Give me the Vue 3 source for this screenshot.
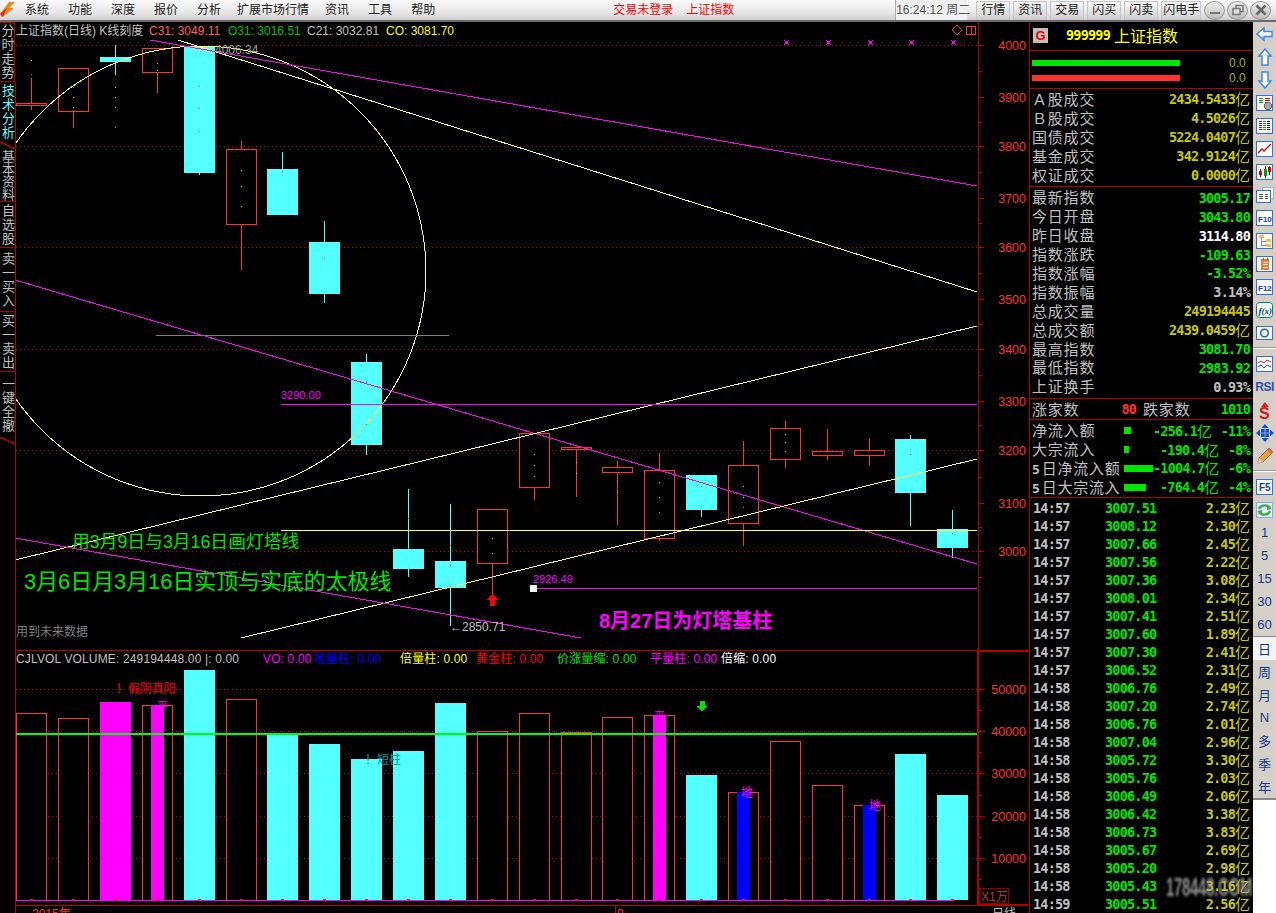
<script setup>
const menus = ['系统', '功能', '深度', '报价', '分析', '扩展市场行情', '资讯', '工具', '帮助']
const quickBtns = ['行情', '资讯', '交易', '闪买', '闪卖', '闪电手']
const tabs = [
  { name: '分时走势', h: 60, cls: 'boxed' },
  { name: '技术分析', h: 67, cls: 'active' },
  { name: '基本资料', h: 53, cls: 'tight' },
  { name: '自选股', h: 46 },
  { name: '卖一买入', h: 64 },
  { name: '买一卖出', h: 60 },
  { name: '一键全撤', h: 72, cls: 'lastTab' }
]

const RED = '#ff3232'
const CYAN = '#54ffff'
const MAG = '#ff00ff'
const GRN = '#00e600'
const GRY = '#c0c0c0'

// hollow = 收阳，实心 = 收阴
const candles = [
  { x: 31, t: 103, b: 105, wt: 78, wb: 110, up: 1, dots: [[60, '#ffff54'], [74, RED]] },
  { x: 73, t: 68, b: 111, wt: 68, wb: 128, up: 1, dots: [[87, '#ff8080'], [97, GRY], [107, GRY]] },
  { x: 115, t: 57, b: 62, wt: 45, wb: 75, up: 0, dots: [[87, GRY], [97, GRY], [107, GRY], [127, GRN]] },
  { x: 157, t: 48, b: 72, wt: 48, wb: 93, up: 1, dots: [[63, '#ff8080'], [70, GRY]] },
  { x: 199, t: 46, b: 173, wt: 46, wb: 175, up: 0, dots: [[86, RED], [108, RED], [131, GRN]] },
  { x: 241, t: 149, b: 224, wt: 141, wb: 270, up: 1, dots: [[170, '#ff8080'], [186, GRY], [206, GRN]] },
  { x: 282, t: 169, b: 215, wt: 152, wb: 215, up: 0, dots: [[171, RED], [190, GRY]] },
  { x: 324, t: 242, b: 294, wt: 221, wb: 303, up: 0, dots: [[258, RED], [275, GRY]] },
  { x: 366, t: 362, b: 445, wt: 354, wb: 455, up: 0, dots: [[382, RED], [402, GRY], [424, GRN]] },
  { x: 408, t: 549, b: 569, wt: 489, wb: 577, up: 0, dots: [[518, RED], [548, GRN]] },
  { x: 450, t: 561, b: 588, wt: 504, wb: 626, up: 0, dots: [[545, RED], [565, RED], [586, GRN]] },
  { x: 492, t: 509, b: 563, wt: 509, wb: 605, up: 1, dots: [[538, '#ff8080'], [553, GRY], [568, GRN]] },
  { x: 534, t: 433, b: 487, wt: 433, wb: 500, up: 1, dots: [[454, '#ff8080'], [465, GRY], [476, GRN]] },
  { x: 576, t: 447, b: 449, wt: 447, wb: 497, up: 1, dots: [[462, '#ff8080'], [473, GRY], [479, GRN]] },
  { x: 617, t: 467, b: 472, wt: 461, wb: 525, up: 1, dots: [[481, '#ff8080'], [492, GRY], [502, GRN]] },
  { x: 659, t: 470, b: 538, wt: 453, wb: 541, up: 1, dots: [[482, '#ff8080'], [497, GRY], [512, GRN]] },
  { x: 701, t: 475, b: 510, wt: 475, wb: 517, up: 0, dots: [[486, RED], [497, GRY]] },
  { x: 743, t: 465, b: 523, wt: 441, wb: 546, up: 1, dots: [[486, '#ff8080'], [497, GRY], [507, GRN]] },
  { x: 785, t: 428, b: 459, wt: 421, wb: 468, up: 1, dots: [[434, '#ff8080'], [442, GRY], [451, GRN]] },
  { x: 827, t: 451, b: 455, wt: 429, wb: 460, up: 1, dots: [] },
  { x: 869, t: 450, b: 455, wt: 438, wb: 466, up: 1, dots: [] },
  { x: 910, t: 439, b: 493, wt: 435, wb: 526, up: 0, dots: [[454, RED], [470, GRY]] },
  { x: 952, t: 529, b: 548, wt: 510, wb: 558, up: 0, dots: [[533, RED]] }
]

// 成交量柱：顶部 y，kind: r 空心红, c 青, m 品红, rm 空心+品红芯, rb 空心+蓝芯
const vols = [
  [713, 'r'], [718, 'r'], [702, 'm'], [705, 'rm'], [670, 'c'], [699, 'r'], [735, 'c'], [744, 'c'],
  [759, 'c'], [751, 'c'], [703, 'c'], [731, 'r'], [713, 'r'], [732, 'r'], [717, 'r'], [715, 'rm'],
  [775, 'c'], [792, 'rb'], [741, 'r'], [785, 'r'], [805, 'rb'], [754, 'c'], [795, 'c']
]
const volBars = vols.map((v, i) => ({ x: candles[i].x, top: v[0], kind: v[1] }))

const gridY = [45, 146, 247, 349, 450, 551]
const axisMain = [
  ['4000', 45], ['3900', 97], ['3800', 146], ['3700', 198], ['3600', 247], ['3500', 299],
  ['3400', 349], ['3300', 401], ['3200', 450], ['3100', 503], ['3000', 551]
]
const minorMain = [71, 122, 172, 223, 273, 324, 375, 425, 477, 527, 577]
const volGrid = [
  ['50000', 689], ['40000', 731], ['30000', 773], ['20000', 816], ['10000', 858]
]
const minorVol = [710, 752, 795, 837, 879]
const markers = [786, 828, 870, 911, 953]

const volLabels = [
  { x: 16, c: GRY, t: 'CJLVOL VOLUME: 249194448.00 |: 0.00' },
  { x: 263, c: MAG, t: 'VO: 0.00' },
  { x: 314, c: '#0000ff', t: '地量柱: 0.00' },
  { x: 400, c: '#ffff00', t: '倍量柱: 0.00' },
  { x: 476, c: '#ff0000', t: '黄金柱: 0.00' },
  { x: 557, c: '#00e600', t: '价涨量缩: 0.00' },
  { x: 650, c: MAG, t: '平量柱: 0.00' },
  { x: 721, c: '#ffffff', t: '倍缩: 0.00' }
]

const turnover = [
  { k: 'Ａ股成交', v: '2434.5433', u: '亿' },
  { k: 'Ｂ股成交', v: '4.5026', u: '亿' },
  { k: '国债成交', v: '5224.0407', u: '亿' },
  { k: '基金成交', v: '342.9124', u: '亿' },
  { k: '权证成交', v: '0.0000', u: '亿' }
]
const stats = [
  { k: '最新指数', v: '3005.17', c: 'green' },
  { k: '今日开盘', v: '3043.80', c: 'green' },
  { k: '昨日收盘', v: '3114.80', c: 'white' },
  { k: '指数涨跌', v: '-109.63', c: 'green' },
  { k: '指数涨幅', v: '-3.52%', c: 'green' },
  { k: '指数振幅', v: '3.14%', c: 'gray' },
  { k: '总成交量', v: '249194445', c: 'olive' },
  { k: '总成交额', v: '2439.0459', u: '亿', c: 'olive' },
  { k: '最高指数', v: '3081.70', c: 'green' },
  { k: '最低指数', v: '2983.92', c: 'green' },
  { k: '上证换手', v: '0.93%', c: 'gray' }
]
const flows = [
  { n: '', k: '净流入额', w: 7, v: '-256.1', p: '-11%', cls: 'shift' },
  { n: '', k: '大宗流入', w: 5, v: '-190.4', p: '-8%' },
  { n: '5', k: '日净流入额', w: 29, v: '-1004.7', p: '-6%' },
  { n: '5', k: '日大宗流入', w: 22, v: '-764.4', p: '-4%' }
]
const ticks = [
  ['14:57', '3007.51', '2.23'], ['14:57', '3008.12', '2.30'], ['14:57', '3007.66', '2.45'],
  ['14:57', '3007.56', '2.22'], ['14:57', '3007.36', '3.08'], ['14:57', '3008.01', '2.34'],
  ['14:57', '3007.41', '2.51'], ['14:57', '3007.60', '1.89'], ['14:57', '3007.30', '2.41'],
  ['14:57', '3006.52', '2.31'], ['14:58', '3006.76', '2.49'], ['14:58', '3007.20', '2.74'],
  ['14:58', '3006.76', '2.01'], ['14:58', '3007.04', '2.96'], ['14:58', '3005.72', '3.30'],
  ['14:58', '3005.76', '2.03'], ['14:58', '3006.49', '2.06'], ['14:58', '3006.42', '3.38'],
  ['14:58', '3006.73', '3.83'], ['14:58', '3005.67', '2.69'], ['14:58', '3005.20', '2.98'],
  ['14:58', '3005.43', '3.16'], ['14:59', '3005.51', '2.56']
]
const periodsTop = ['1', '5', '15', '30', '60']
const periodsBottom = ['周', '月', 'N', '多', '季', '年']
</script>

<template>
  <div class="app">
    <!-- 顶部菜单 -->
    <header class="topbar">
      <svg class="logo" width="15" height="18" viewBox="0 0 15 18">
        <polygon points="0,14 9,2 15,2 9,8 14,8 2,17" fill="#f08018" />
        <polygon points="0,14 7,8 3,17" fill="#d83010" />
      </svg>
      <nav class="menu">
        <span v-for="m in menus" :key="m" :class="{ ext: m.length > 2 }">{{ m }}</span>
      </nav>
      <div class="status">
        <span>交易未登录</span>
        <span>上证指数</span>
      </div>
      <div class="clock">16:24:12 周二</div>
      <div class="quick">
        <span v-for="b in quickBtns" :key="b" class="qbtn">{{ b }}</span>
      </div>
      <div class="winbtns">
        <span class="wbtn"><svg width="14" height="14" viewBox="0 0 14 14"><rect x="2" y="9" width="10" height="2" fill="#777" /></svg></span>
        <span class="wbtn"><svg width="14" height="14" viewBox="0 0 14 14"><rect x="5" y="2.5" width="7" height="6" fill="none" stroke="#777" stroke-width="1.5" /><rect x="2" y="5.5" width="7" height="6" fill="#ddd" stroke="#777" stroke-width="1.5" /></svg></span>
        <span class="wbtn"><svg width="14" height="14" viewBox="0 0 14 14"><path d="M2.5 2.5 L11.5 11.5 M11.5 2.5 L2.5 11.5" stroke="#666" stroke-width="2.6" /></svg></span>
      </div>
    </header>

    <div class="body">
      <!-- 左侧页签 -->
      <aside class="tabs">
        <div v-for="t in tabs" :key="t.name" class="tab" :class="t.cls" :style="{ height: t.h + 'px' }">{{ t.name }}</div>
      </aside>

      <!-- K线 + 成交量，坐标直接用整页像素 -->
      <svg class="chart" width="1014" height="891" viewBox="15 22 1014 891" shape-rendering="crispEdges">
        <defs>
          <clipPath id="plot"><rect x="15" y="22" width="963" height="628" /></clipPath>
        </defs>

        <!-- 网格 -->
        <line v-for="y in gridY" :key="'g' + y" x1="16" x2="977" :y1="y + 0.5" :y2="y + 0.5" class="dots" />
        <line v-for="g in volGrid" :key="'v' + g[1]" x1="16" x2="977" :y1="g[1] + 0.5" :y2="g[1] + 0.5" class="dots" />

        <!-- 蜡烛 -->
        <g v-for="c in candles" :key="c.x">
          <line :x1="c.x + 0.5" :x2="c.x + 0.5" :y1="c.wt" :y2="c.wb" :stroke="c.up ? RED : CYAN" />
          <rect v-if="c.up" :x="c.x - 14.5" :y="c.t + 0.5" width="30" :height="c.b - c.t" fill="#000" :stroke="RED" stroke-width="1" />
          <rect v-else :x="c.x - 15" :y="c.t" width="31" :height="c.b - c.t" :fill="CYAN" />
          <rect v-for="(d, i) in c.dots" :key="i" :x="c.x" :y="d[0]" width="1" height="1" :fill="d[1]" />
        </g>

        <!-- 画线 -->
        <g clip-path="url(#plot)">
          <circle cx="201" cy="271" r="225" fill="none" stroke="#ffff66" />
          <line x1="178" y1="40" x2="977" y2="292" stroke="#ffff66" />
          <line x1="150" y1="40" x2="977" y2="186" :stroke="MAG" />
          <line x1="15" y1="280" x2="977" y2="564" :stroke="MAG" />
          <line x1="15" y1="560" x2="977" y2="326" stroke="#ffff66" />
          <line x1="241" y1="638" x2="977" y2="459" stroke="#ffff66" />
          <line x1="15" y1="538" x2="581" y2="638" :stroke="MAG" />
          <line x1="281" y1="404.5" x2="977" y2="404.5" :stroke="MAG" />
          <line x1="281" y1="530.5" x2="977" y2="530.5" stroke="#ffff66" />
          <line x1="533" y1="588.5" x2="977" y2="588.5" :stroke="MAG" />
          <line x1="156" y1="335.5" x2="449" y2="335.5" stroke="#808080" />
          <rect x="530" y="585" width="7" height="7" fill="#fff" />
          <g v-for="m in markers" :key="m">
            <rect :x="m - 1" y="41" width="3" height="3" :fill="MAG" />
            <path :d="`M${m - 2} 40h1v1h-1z M${m + 2} 40h1v1h-1z M${m - 2} 44h1v1h-1z M${m + 2} 44h1v1h-1z`" :fill="MAG" />
          </g>
        </g>

        <polygon points="492.5,594 498,600 495,600 495,606 490,606 490,600 487,600" fill="#ff0000" />
        <polygon points="957,25 962,30 957,35 952,30" fill="none" :stroke="RED" />
        <rect x="966.5" y="26.5" width="9" height="8" fill="none" :stroke="RED" />
        <line x1="971.5" y1="26" x2="971.5" y2="35" :stroke="RED" />

        <!-- 主图文字 -->
        <g class="t" shape-rendering="auto">
          <text x="16" y="35" fill="#c0c0c0">上证指数(日线) K线刻度</text>
          <text x="149" y="35" fill="#ff6060">C31: 3049.11</text>
          <text x="228" y="35" fill="#00c000">O31: 3016.51</text>
          <text x="307" y="35" fill="#c0c0c0">C21: 3032.81</text>
          <text x="386" y="35" fill="#ffff00">CO: 3081.70</text>
          <text x="215" y="54" fill="#a0a0a0">4006.34</text>
          <text x="281" y="399" :fill="MAG" class="small">3290.00</text>
          <text x="533" y="583" :fill="MAG" class="small">2926.49</text>
          <text x="450" y="631" fill="#c0c0c0">←2850.71</text>
          <text x="72" y="548" fill="#00e600" class="note1">用3月9日与3月16日画灯塔线</text>
          <text x="24" y="589" fill="#00e600" class="note2">3月6日月3月16日实顶与实底的太极线</text>
          <text x="599" y="628" :fill="MAG" class="note3">8月27日为灯塔基柱</text>
          <text x="16" y="636" fill="#808080">用到未来数据</text>
          <text v-for="a in axisMain" :key="a[0]" x="1026" :y="a[1] + 5" :fill="RED" class="ax">{{ a[0] }}</text>
        </g>

        <!-- 分隔线 -->
        <line x1="978.5" x2="978.5" y1="22" y2="650" stroke="#b00000" />
        <line v-for="a in axisMain" :key="'t' + a[0]" x1="979" x2="984" :y1="a[1] + 0.5" :y2="a[1] + 0.5" stroke="#b00000" />
        <line v-for="y in minorMain" :key="'m' + y" x1="979" x2="982" :y1="y + 0.5" :y2="y + 0.5" stroke="#b00000" />
        <rect x="15" y="650" width="1014" height="1" fill="#c00000" />
        <rect x="14.5" y="82" width="1" height="831" fill="#c00000" />

        <!-- 成交量 -->
        <g v-for="v in volBars" :key="'b' + v.x">
          <rect v-if="v.kind === 'c' || v.kind === 'm'" :x="v.x - 15" :y="v.top" width="31" :height="900 - v.top" :fill="v.kind === 'c' ? CYAN : MAG" />
          <rect v-else :x="v.x - 14.5" :y="v.top + 0.5" width="30" :height="900 - v.top" fill="#000" :stroke="RED" />
          <rect v-if="v.kind === 'rm'" :x="v.x - 6" :y="v.top" width="13" :height="900 - v.top" :fill="MAG" />
          <rect v-if="v.kind === 'rb'" :x="v.x - 6" :y="v.top" width="13" :height="900 - v.top" fill="#0000ff" />
        </g>
        <rect x="16" y="733" width="961" height="2" fill="#00ff00" />
        <rect x="16" y="900" width="937" height="1" :fill="MAG" />
        <rect v-for="c in candles" :key="'k' + c.x" :x="c.x - 1" y="899" width="3" height="2" fill="#ff1040" />
        <polygon points="702,712 707,706 704.5,706 704.5,701 699.5,701 699.5,706 697,706" fill="#00e600" />

        <g class="t" shape-rendering="auto">
          <text v-for="l in volLabels" :key="l.x" :x="l.x" y="663" :fill="l.c" class="vl">{{ l.t }}</text>
          <text x="116" y="693" fill="#ff0000">！假阴真阳</text>
          <text x="365" y="764" fill="#009a9a">！短柱</text>
          <text x="157" y="710" :fill="MAG" class="tiny">平</text>
          <text x="654" y="720" :fill="MAG" class="tiny">平</text>
          <text x="741" y="797" :fill="MAG">地</text>
          <text x="869" y="810" :fill="MAG">地</text>
          <text v-for="g in volGrid" :key="g[0]" x="1026" :y="g[1] + 5" :fill="RED" class="ax">{{ g[0] }}</text>
          <text x="981" y="901" fill="#c03030">X1万</text>
          <text x="32" y="918" fill="#ff3232">2015年</text>
          <text x="617" y="918" fill="#ff3232">9</text>
          <text x="992" y="918" fill="#c0c0c0">日线</text>
        </g>

        <rect x="977" y="650" width="2" height="256" fill="#b00000" />
        <rect x="977" y="650" width="52" height="2" fill="#b00000" />
        <rect x="15" y="905" width="1014" height="1" fill="#c00000" />
        <rect x="977" y="904" width="52" height="2" fill="#b00000" />
        <rect x="979.5" y="888.5" width="29" height="15" fill="none" stroke="#900000" />
        <line x1="615.5" x2="615.5" y1="906" y2="913" stroke="#c00000" />
        <line v-for="g in volGrid" :key="'vt' + g[0]" x1="979" x2="985" :y1="g[1] + 0.5" :y2="g[1] + 0.5" stroke="#b00000" />
        <line v-for="y in minorVol" :key="'vm' + y" x1="979" x2="982" :y1="y + 0.5" :y2="y + 0.5" stroke="#b00000" />
      </svg>

      <!-- 右侧报价 -->
      <section class="panel">
        <div class="title">
          <span class="g">G</span>
          <span class="code">999999</span>
          <span class="name">上证指数</span>
        </div>
        <div class="bars">
          <div class="barrow"><i class="bar bg" /><span>0.0</span></div>
          <div class="barrow"><i class="bar br" /><span>0.0</span></div>
        </div>
        <div class="block">
          <div v-for="r in turnover" :key="r.k" class="row">
            <span class="k">{{ r.k }}</span>
            <span class="v olive">{{ r.v }}<em>{{ r.u }}</em></span>
          </div>
        </div>
        <div class="block">
          <div v-for="r in stats" :key="r.k" class="row">
            <span class="k">{{ r.k }}</span>
            <span class="v" :class="r.c">{{ r.v }}<em v-if="r.u">{{ r.u }}</em></span>
          </div>
        </div>
        <div class="block updown">
          <span class="k">涨家数</span>
          <span class="v red n80">80</span>
          <span class="k k2">跌家数</span>
          <span class="v green last">1010</span>
        </div>
        <div class="block flows">
          <div v-for="f in flows" :key="f.k" class="row flow" :class="f.cls">
            <span class="k fk"><b v-if="f.n">{{ f.n }}</b>{{ f.k }}</span>
            <span class="fbar"><i :style="{ width: f.w + 'px' }" /></span>
            <span class="v green fv">{{ f.v }}<em>亿</em></span>
            <span class="v green fp">{{ f.p }}</span>
          </div>
        </div>
        <div class="ticklist">
          <div v-for="(t, i) in ticks" :key="i" class="tick">
            <span class="v tt">{{ t[0] }}</span>
            <span class="v green tp">{{ t[1] }}</span>
            <span class="v olive ta">{{ t[2] }}<em>亿</em></span>
          </div>
        </div>
        <div class="mark">178448.COM</div>
      </section>

      <!-- 右侧工具条 -->
      <aside class="tools">
        <div class="tool"><svg class="ico" viewBox="0 0 18 18"><polygon points="1,9 8,3 8,6.5 16,6.5 16,11.5 8,11.5 8,15" fill="#fff" stroke="#3a86f0" stroke-width="1.5" /></svg></div>
        <div class="tool"><svg class="ico" viewBox="0 0 18 18"><polygon points="9,1 15,8 12,8 12,17 6,17 6,8 3,8" fill="#fff" stroke="#3a86f0" stroke-width="1.5" /></svg></div>
        <div class="tool"><svg class="ico" viewBox="0 0 18 18"><polygon points="9,17 15,10 12,10 12,1 6,1 6,10 3,10" fill="#fff" stroke="#3a86f0" stroke-width="1.5" /></svg></div>
        <div class="tool"><svg class="ico" viewBox="0 0 18 18" shape-rendering="crispEdges"><rect x=".5" y="1.5" width="16" height="15" fill="#fff" stroke="#2f6fe0" /><path d="M3 4h4M3 6h4M3 8h4" stroke="#00a000" /><path d="M9 4h5M9 6h5M9 8h3" stroke="#e00000" /><circle cx="12" cy="12" r="3.5" fill="#a8a8a8" stroke="#666" /></svg></div>
        <div class="tool"><svg class="ico" viewBox="0 0 18 18" shape-rendering="crispEdges"><rect x=".5" y="1.5" width="16" height="15" fill="#fff" stroke="#2f6fe0" /><path d="M3 4h3M3 6h3M3 8h3M3 10h3M3 12h3" stroke="#e00000" /><path d="M7 4h3M7 6h3M7 8h3M7 10h3M7 12h3" stroke="#00a000" /><path d="M11 4h3M11 6h3M11 8h3M11 10h3M11 12h3" stroke="#0000d0" /></svg></div>
        <div class="tool"><svg class="ico" viewBox="0 0 18 18"><rect x=".5" y="1.5" width="16" height="15" fill="#fff" stroke="#2f6fe0" /><polyline points="2,13 6,9 8,11 12,7 15,4" fill="none" stroke="#e00000" stroke-width="1.3" /></svg></div>
        <div class="tool"><svg class="ico" viewBox="0 0 18 18" shape-rendering="crispEdges"><rect x=".5" y="1.5" width="16" height="15" fill="#fff" stroke="#2f6fe0" /><path d="M4.5 6v8M9 3v12M13.5 3v9" stroke="#222" /><rect x="3" y="8" width="3" height="4" fill="#e00000" /><rect x="7.5" y="6" width="3" height="7" fill="#00a000" /><rect x="12" y="4" width="3" height="5" fill="#e00000" /></svg></div>
        <div class="tool"><svg class="ico" viewBox="0 0 18 18" shape-rendering="crispEdges"><rect x="6.5" y="1.5" width="11" height="11" fill="#fff" stroke="#8ab4f0" /><rect x=".5" y="4.5" width="14" height="12" fill="#fff" stroke="#2f6fe0" /><path d="M3 8h4M3 10h4M3 12h4M9 8h3M9 10h3M9 12h3" stroke="#555" /></svg></div>
        <div class="tool"><svg class="ico" viewBox="0 0 18 18"><rect x=".5" y="1.5" width="16" height="15" fill="#fff" stroke="#2f6fe0" /><text x="2" y="12.5" class="ifont" fill="#1040c0">F10</text></svg></div>
        <div class="tool"><svg class="ico" viewBox="0 0 18 18" shape-rendering="crispEdges"><rect x=".5" y="1.5" width="16" height="15" fill="#fff" stroke="#2f6fe0" /><path d="M5 6v7h5M5 9h5" stroke="#888" fill="none" /><rect x="3" y="3" width="5" height="3" fill="#f0c040" /><rect x="10" y="7" width="5" height="3" fill="#f0c040" /><rect x="10" y="12" width="5" height="3" fill="#f0c040" /></svg></div>
        <div class="tool"><svg class="ico" viewBox="0 0 18 18" shape-rendering="crispEdges"><rect x=".5" y="1.5" width="16" height="15" fill="#fff" stroke="#2f6fe0" /><rect x="5" y="4" width="8" height="11" fill="#f07830" /><path d="M7 3v2M11 3v2" stroke="#c04000" /><path d="M6.5 7h5M6.5 9.5h5M6.5 12h5" stroke="#fff" /></svg></div>
        <div class="tool"><svg class="ico" viewBox="0 0 18 18"><rect x=".5" y="1.5" width="16" height="15" fill="#fff" stroke="#2f6fe0" /><text x="2" y="12.5" class="ifont" fill="#1040c0">F12</text></svg></div>
        <div class="tool"><svg class="ico" viewBox="0 0 18 18"><rect x=".5" y="1.5" width="16" height="15" rx="3" fill="#f8fff8" stroke="#008080" /><text x="2.5" y="13" class="ifx" fill="#003080">f(x)</text></svg></div>
        <div class="tool"><svg class="ico" viewBox="0 0 18 18"><rect x=".5" y="2.5" width="16" height="13" fill="#fff" stroke="#2f6fe0" /><circle cx="8.5" cy="9" r="3.8" fill="none" stroke="#1060d0" stroke-width="1.5" /></svg></div>
        <div class="sep" />
        <div class="tool"><svg class="ico" viewBox="0 0 18 18"><rect x=".5" y="1.5" width="16" height="15" fill="#fff" stroke="#2f6fe0" /><polyline points="2,8 5,6 8,8 11,5 15,7" fill="none" stroke="#e02020" /><polyline points="2,12 5,10 8,13 11,10 15,12" fill="none" stroke="#2040e0" /></svg></div>
        <div class="tool"><span class="rsi">RSI</span></div>
        <div class="tool"><svg class="ico" viewBox="0 0 18 18"><path d="M9 1 L13 6 H5 Z" fill="#e02020" /><text x="3" y="18" class="ifs" fill="#d01818">S</text></svg></div>
        <div class="tool"><svg class="ico" viewBox="0 0 18 18"><path d="M9 0 L12.5 4 H5.5 Z M9 18 L12.5 14 H5.5 Z M0 9 L4 5.5 V12.5 Z M18 9 L14 5.5 V12.5 Z" fill="#1050c8" /><rect x="5" y="5" width="8" height="8" fill="#1050c8" /><path d="M9 4v10M4 9h10" stroke="#80a8f0" /></svg></div>
        <div class="tool"><svg class="ico" viewBox="0 0 18 18"><polygon points="2,16 3,11 13,1 17,5 7,15" fill="#e8a040" stroke="#805020" stroke-width=".7" /><polygon points="2,16 3,11 7,15" fill="#f0e0c0" /><polygon points="13,1 17,5 15,7 11,3" fill="#e06060" /></svg></div>
        <div class="sep" />
        <div class="tool"><svg class="ico" viewBox="0 0 18 18"><rect x=".5" y="1.5" width="16" height="15" fill="#fff" stroke="#2f6fe0" /><text x="3" y="13" class="ifive" fill="#1040c0">F5</text></svg></div>
        <div class="tool"><svg class="ico" viewBox="0 0 18 18"><rect x=".5" y="1.5" width="16" height="15" fill="#eef" stroke="#7ab0f0" /><path d="M3 8 A6 5 0 0 1 14 7 M14 10 A6 5 0 0 1 3 11" fill="none" stroke="#40b040" stroke-width="2.4" /><path d="M11 4 L16 8 L11 9 Z M6 14 L1 10 L6 9 Z" fill="#40b040" /></svg></div>
        <div v-for="p in periodsTop" :key="p" class="tool per">{{ p }}</div>
        <div class="tool per on">日</div>
        <div v-for="p in periodsBottom" :key="p" class="tool per">{{ p }}</div>
        <div class="toolend" />
      </aside>
    </div>
  </div>
</template>

<style scoped>
.app {
  width: 1276px;
  height: 913px;
  overflow: hidden;
  background: #000;
  font-family: "Liberation Sans", "Noto Sans CJK SC", sans-serif;
  font-size: 12px;
}

/* 顶部 */
.topbar {
  position: relative;
  height: 20px;
  display: flex;
  align-items: center;
  background: linear-gradient(#fafafa, #e8e8e8 60%, #cfcfcf);
  border-bottom: 2px solid #6a6a6a;
  color: #222;
  line-height: 20px;
  white-space: nowrap;
}
.topbar > * {
  flex: none;
}
.logo {
  position: absolute;
  left: 0;
  top: 0;
}
.menu {
  display: flex;
  gap: 19px;
  padding-left: 25px;
}
.menu .ext {
  margin: 0 -3px;
}
.status {
  display: flex;
  gap: 13px;
  margin-left: 178px;
  color: #ff0000;
}
.clock {
  margin-left: 161px;
  width: 72px;
  height: 20px;
  box-sizing: border-box;
  text-align: center;
  background: #f0f0f0;
  border-left: 1px solid #aaa;
  color: #555;
}
.quick {
  display: flex;
  gap: 3px;
  margin-left: 9px;
}
.qbtn {
  height: 17px;
  line-height: 17px;
  padding: 0 4px;
  background: linear-gradient(#f8f8f8, #cfcfcf);
  border: 1px solid #c4c4c4;
}
.qbtn:last-child {
  padding: 0 1px;
}
.winbtns {
  display: flex;
  gap: 2px;
  margin-left: 3px;
}
.wbtn {
  width: 21px;
  height: 19px;
  border-radius: 50%;
  background: linear-gradient(#f0f0f0, #bcbcbc);
  border: 1px solid #999;
  display: flex;
  align-items: center;
  justify-content: center;
  box-sizing: border-box;
}

.body {
  display: flex;
  height: 891px;
}

/* 左页签 */
.tabs {
  width: 15px;
  flex: none;
}
.tab {
  position: relative;
  box-sizing: border-box;
  width: 15px;
  display: flex;
  align-items: center;
  justify-content: center;
  writing-mode: vertical-rl;
  text-orientation: upright;
  white-space: nowrap;
  color: #c0c0c0;
  font-size: 13px;
  letter-spacing: 1px;
  line-height: 15px;
  border-bottom: 1px solid #b00000;
}
.tab.boxed {
  border: 1px solid #b00000;
  border-left: 0;
}
.tab.active,
.tab.lastTab {
  border-bottom: 0;
  padding-bottom: 7px;
}
.tab.active {
  color: #54ffff;
}
.tab.active::after,
.tab.lastTab::after {
  content: "";
  position: absolute;
  left: 0;
  bottom: 0;
  width: 15px;
  height: 7px;
  background: linear-gradient(to top right, transparent 44%, #b00000 44%, #b00000 56%, transparent 56%);
}
.tab.tight {
  letter-spacing: -0.5px;
}

.chart {
  flex: none;
  display: block;
  background: #000;
}
.dots {
  stroke: #c00000;
  stroke-dasharray: 1 3;
}
.t text {
  font-family: "Liberation Sans", "Noto Sans CJK SC", sans-serif;
  font-size: 12px;
}
.t .small {
  font-size: 11px;
}
.t .note1 {
  font-size: 17.8px;
}
.t .note2 {
  font-size: 21.9px;
}
.t .note3 {
  font-size: 20px;
  font-weight: 700;
}
.t .ax {
  text-anchor: end;
  font-size: 12.5px;
}
.t .vl {
  letter-spacing: 0.15px;
}
.t .tiny {
  font-size: 11px;
}

/* 右面板 */
.panel {
  position: relative;
  width: 224px;
  flex: none;
  box-sizing: border-box;
  border-left: 1px solid #b00000;
  color: #c0c0c0;
  overflow: hidden;
}
.title {
  height: 29px;
  box-sizing: border-box;
  padding: 0 0 2px 3px;
  display: flex;
  align-items: center;
  border-bottom: 1px solid #b00000;
}
.g {
  width: 15px;
  height: 15px;
  line-height: 15px;
  text-align: center;
  background: #c0c0c0;
  color: #f00000;
  font-weight: 700;
  font-size: 13px;
}
.code {
  margin-left: 18px;
  color: #ffff00;
  font: 700 13.5px "DejaVu Sans Mono", monospace;
  letter-spacing: -0.8px;
}
.name {
  margin-left: 4px;
  color: #ffff00;
  font-size: 16px;
}
.bars {
  height: 38px;
  padding-top: 4px;
  box-sizing: border-box;
  border-bottom: 1px solid #b00000;
}
.barrow {
  display: flex;
  align-items: center;
  height: 15px;
  padding-left: 2px;
  color: #b0b000;
  font-size: 12px;
}
.barrow span {
  margin-left: 49px;
}
.bar {
  display: block;
  width: 148px;
  height: 6px;
}
.bg {
  background: #00e600;
}
.br {
  background: #ff3232;
}
.block {
  border-bottom: 1px solid #b00000;
  padding: 1px 0 2px;
}
.flows {
  padding-bottom: 0;
}
.row {
  display: flex;
  justify-content: space-between;
  align-items: center;
  height: 18.9px;
  padding: 0 3px 0 2px;
  white-space: nowrap;
}
.k {
  font-size: 15px;
  letter-spacing: 0.8px;
  line-height: 19px;
  color: #c0c0c0;
}
.v {
  font: 700 13.5px/18px "DejaVu Sans Mono", monospace;
  letter-spacing: -0.8px;
}
.v em {
  font: 400 15px/15px "Noto Sans CJK SC", sans-serif;
  letter-spacing: 0;
  vertical-align: -1px;
}
.olive {
  color: #c8c800;
}
.green {
  color: #00e600;
}
.white {
  color: #fff;
}
.gray {
  color: #c0c0c0;
}
.red {
  color: #ff3232;
}
.updown {
  display: flex;
  align-items: center;
  height: 21px;
  box-sizing: border-box;
  padding: 0 3px 0 2px;
  white-space: nowrap;
}
.n80 {
  margin-left: 42px;
}
.k2 {
  margin-left: 7px;
}
.last {
  margin-left: auto;
}
.flow {
  justify-content: flex-start;
}
.fk {
  width: 92px;
  flex: none;
}
.fk b {
  font: 700 13px "DejaVu Sans Mono", monospace;
  margin-right: 1px;
}
.fbar {
  width: 29px;
  flex: none;
  display: flex;
  align-items: center;
}
.fbar i {
  display: block;
  height: 7px;
  background: #00e600;
}
.fv {
  width: 66px;
  flex: none;
  text-align: right;
}
.shift .fv {
  padding-right: 7px;
  box-sizing: border-box;
}
.fp {
  flex: 1;
  text-align: right;
}
.ticklist {
  padding: 1px 0 0 3px;
}
.tick {
  display: flex;
  align-items: center;
  height: 18px;
  white-space: nowrap;
}
.tt {
  width: 72px;
  flex: none;
  color: #c0c0c0;
}
.tp {
  width: 51px;
  flex: none;
}
.ta {
  flex: 1;
  text-align: right;
  padding-right: 3px;
}
.mark {
  position: absolute;
  left: 136px;
  top: 857px;
  color: rgba(160, 160, 160, 0.92);
  font: 700 14.8px "Liberation Sans", sans-serif;
  letter-spacing: -0.2px;
  filter: blur(0.8px);
  white-space: nowrap;
  transform: scaleY(1.7);
}

/* 工具条 */
.tools {
  width: 23px;
  flex: none;
  background: #fff;
}
.tool {
  height: 23px;
  background: #d4d0c8;
  display: flex;
  align-items: center;
  justify-content: center;
}
.sep {
  height: 8px;
  background: linear-gradient(#d4d0c8 3px, #999 3px, #999 4px, #fff 4px, #fff 5px, #d4d0c8 5px);
}
.ico {
  width: 18px;
  height: 18px;
  display: block;
}
.ifont {
  font: 700 8px "Liberation Sans", sans-serif;
}
.ifive {
  font: 700 10px "Liberation Sans", sans-serif;
}
.ifx {
  font: italic 700 9px "Liberation Serif", serif;
}
.ifs {
  font: 700 16px "Liberation Sans", sans-serif;
}
.rsi {
  color: #3050c0;
  font: 700 12px "Liberation Sans", sans-serif;
  letter-spacing: -0.5px;
}
.per {
  color: #103a90;
  font-size: 13px;
}
.per.on {
  height: 24px;
  box-sizing: border-box;
  background: #f4f4f4;
  border-top: 1px solid #888;
}
.toolend {
  height: 2px;
  background: #888;
}
</style>

<style>
html, body {
  margin: 0;
  background: #000;
  overflow: hidden;
}
</style>
